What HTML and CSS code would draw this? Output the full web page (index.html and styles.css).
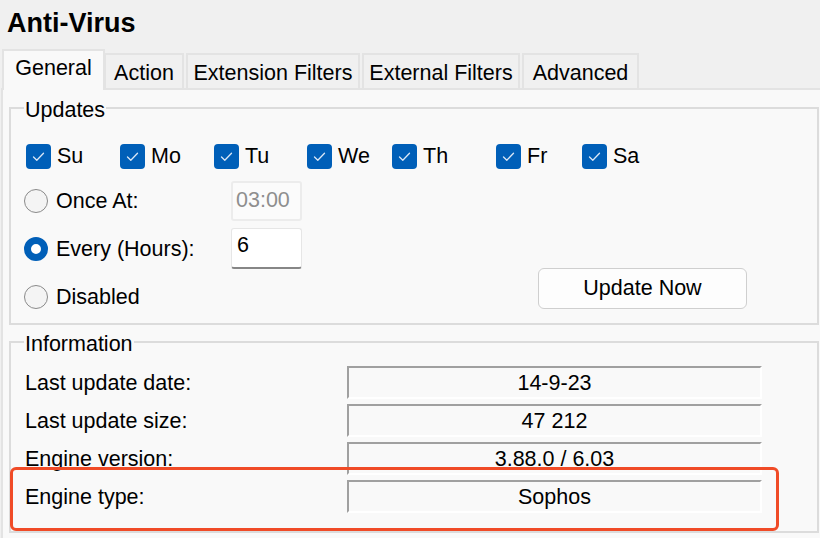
FILE: index.html
```html
<!DOCTYPE html>
<html lang="en">
<head>
<meta charset="utf-8">
<title>Anti-Virus</title>
<link rel="stylesheet" href="styles.css">
</head>
<body>
<div class="window">
  <h1 class="title">Anti-Virus</h1>
  <div class="tabs">
    <div class="tab tab-general active">General</div>
    <div class="tab tab-action">Action</div>
    <div class="tab tab-ext">Extension Filters</div>
    <div class="tab tab-extern">External Filters</div>
    <div class="tab tab-adv">Advanced</div>
  </div>
  <div class="panel">
    <fieldset class="group group-updates">
      <legend class="legend">Updates</legend>
      <div class="days">
        <label class="check"><span class="box"><svg viewBox="0 0 25 25" width="25" height="25"><path d="M7.5 13 L10.8 16.2 L17.5 9.3" fill="none" stroke="#dbe8f6" stroke-width="1.3" stroke-linecap="round" stroke-linejoin="round"/></svg></span>Su</label>
        <label class="check"><span class="box"><svg viewBox="0 0 25 25" width="25" height="25"><path d="M7.5 13 L10.8 16.2 L17.5 9.3" fill="none" stroke="#dbe8f6" stroke-width="1.3" stroke-linecap="round" stroke-linejoin="round"/></svg></span>Mo</label>
        <label class="check"><span class="box"><svg viewBox="0 0 25 25" width="25" height="25"><path d="M7.5 13 L10.8 16.2 L17.5 9.3" fill="none" stroke="#dbe8f6" stroke-width="1.3" stroke-linecap="round" stroke-linejoin="round"/></svg></span>Tu</label>
        <label class="check"><span class="box"><svg viewBox="0 0 25 25" width="25" height="25"><path d="M7.5 13 L10.8 16.2 L17.5 9.3" fill="none" stroke="#dbe8f6" stroke-width="1.3" stroke-linecap="round" stroke-linejoin="round"/></svg></span>We</label>
        <label class="check"><span class="box"><svg viewBox="0 0 25 25" width="25" height="25"><path d="M7.5 13 L10.8 16.2 L17.5 9.3" fill="none" stroke="#dbe8f6" stroke-width="1.3" stroke-linecap="round" stroke-linejoin="round"/></svg></span>Th</label>
        <label class="check"><span class="box"><svg viewBox="0 0 25 25" width="25" height="25"><path d="M7.5 13 L10.8 16.2 L17.5 9.3" fill="none" stroke="#dbe8f6" stroke-width="1.3" stroke-linecap="round" stroke-linejoin="round"/></svg></span>Fr</label>
        <label class="check"><span class="box"><svg viewBox="0 0 25 25" width="25" height="25"><path d="M7.5 13 L10.8 16.2 L17.5 9.3" fill="none" stroke="#dbe8f6" stroke-width="1.3" stroke-linecap="round" stroke-linejoin="round"/></svg></span>Sa</label>
      </div>
      <div class="schedule">
        <label class="radio"><span class="dot"></span>Once At:</label>
        <div class="field field-disabled">03:00</div>
        <label class="radio radio-checked"><span class="dot"></span>Every (Hours):</label>
        <div class="field field-active">6</div>
        <label class="radio radio-last"><span class="dot"></span>Disabled</label>
        <button class="btn" type="button">Update Now</button>
      </div>
    </fieldset>
    <fieldset class="group group-info">
      <legend class="legend">Information</legend>
      <div class="info">
        <div class="info-label">Last update date:</div><div class="info-value">14-9-23</div>
        <div class="info-label">Last update size:</div><div class="info-value">47 212</div>
        <div class="info-label">Engine version:</div><div class="info-value">3.88.0 / 6.03</div>
        <div class="info-label">Engine type:</div><div class="info-value">Sophos</div>
      </div>
    </fieldset>
  </div>
  <div class="highlight"></div>
</div>
</body>
</html>
```
FILE: styles.css
```css
html, body {
  margin: 0;
  padding: 0;
  background: #f0f0f0;
  overflow: hidden;
}
body {
  font-family: "Liberation Sans", Arial, sans-serif;
  font-size: 21.5px;
  color: #000;
}
.window {
  position: relative;
  width: 840px;
  height: 538px;
  overflow: hidden;
}
.title {
  margin: 0;
  padding-left: 7px;
  height: 49px;
  line-height: 46px;
  font-size: 27px;
  font-weight: bold;
}
.tabs {
  display: flex;
  align-items: flex-end;
  height: 39px;
  padding-left: 2px;
  position: relative;
  z-index: 2;
}
.tab {
  box-sizing: border-box;
  height: 35px;
  border: 2px solid #e3e3e3;
  border-bottom: none;
  background: #f0f0f0;
  line-height: 30px;
  padding-top: 3px;
  text-align: center;
  margin-right: 2px;
  white-space: nowrap;
}
.tab.active {
  height: 41px;
  margin-bottom: -2px;
  padding-top: 2px;
  background: #f9f9f9;
  margin-right: -1px;
  position: relative;
  z-index: 3;
}
.tab-general { width: 103px; }
.tab-action { width: 80px; }
.tab-ext { width: 174px; }
.tab-extern { width: 158px; }
.tab-adv { width: 117px; }

.panel {
  margin-left: 1px;
  border: 2px solid #e3e3e3;
  background: #f9f9f9;
  height: 460px;
  box-sizing: border-box;
}
.group {
  margin: 0;
  min-inline-size: 0;
  box-sizing: border-box;
  width: 810px;
  border: 2px solid #dcdcdc;
}
.legend {
  padding: 4px 1px 0;
  line-height: 26px;
}
.group-updates {
  margin: 3px 0 0 6px;
  padding: 19px 0 5px 15px;
}
.group-updates .legend { margin-left: -2px; }
.group-info {
  margin: 2px 0 0 6px;
  padding: 9px 0 18px 14px;
}
.group-info .legend { margin-left: -1px; }

.days {
  display: grid;
  grid-template-columns: 94px 94px 93px 85px 104px 86px auto;
  height: 28px;
  align-items: center;
}
.check {
  display: flex;
  align-items: center;
  gap: 6px;
  line-height: 28px;
}
.box {
  width: 25px;
  height: 25px;
  border-radius: 4px;
  background: #005fb8;
  display: block;
}
.box svg { display: block; }

.schedule {
  margin-top: 11px;
  margin-left: -2px;
  display: grid;
  grid-template-columns: 207px 71px 236px 209px;
  grid-template-rows: 40px 41px 42px;
  row-gap: 7px;
}
.radio {
  display: flex;
  align-items: center;
  gap: 8px;
  line-height: 28px;
  grid-column: 1;
}
.radio-last { grid-row: 3; }
.dot {
  box-sizing: border-box;
  width: 24px;
  height: 24px;
  border-radius: 50%;
  border: 1.5px solid #8a8a8a;
  background: #f4f4f4;
  display: block;
}
.radio-checked .dot {
  border: 7px solid #005fb8;
  background: #ffffff;
}
.field {
  box-sizing: border-box;
  grid-column: 2;
  border-radius: 3px;
  padding-left: 5px;
  line-height: 34px;
}
.field-disabled {
  border: 2px solid #ececec;
  background: #fbfbfb;
  color: #8e8e8e;
  padding-left: 3px;
}
.field-active {
  border: 1px solid #e6e6e6;
  border-bottom: 2px solid #868686;
  background: #ffffff;
  line-height: 32px;
}
.btn {
  grid-column: 4;
  grid-row: 2 / 4;
  align-self: end;
  height: 41px;
  margin-bottom: 9px;
  border: 1.5px solid #cfcfcf;
  border-radius: 6px;
  background: #fdfdfd;
  font: inherit;
  color: #000;
  padding: 0;
}

.info {
  display: grid;
  grid-template-columns: 322px 415px;
  grid-auto-rows: 33px;
  row-gap: 5px;
  align-items: center;
}
.info-label {
  line-height: 28px;
}
.info-value {
  box-sizing: border-box;
  height: 33px;
  padding-top: 1px;
  border-top: 2px solid #a0a0a0;
  border-left: 2px solid #a0a0a0;
  border-right: 2px solid #ffffff;
  border-bottom: 2px solid #ffffff;
  text-align: center;
  line-height: 28px;
}

.highlight {
  position: absolute;
  left: 10px;
  top: 467px;
  width: 769px;
  height: 64px;
  box-sizing: border-box;
  border: 3.5px solid #f04b27;
  border-radius: 6px;
  z-index: 5;
}
```
